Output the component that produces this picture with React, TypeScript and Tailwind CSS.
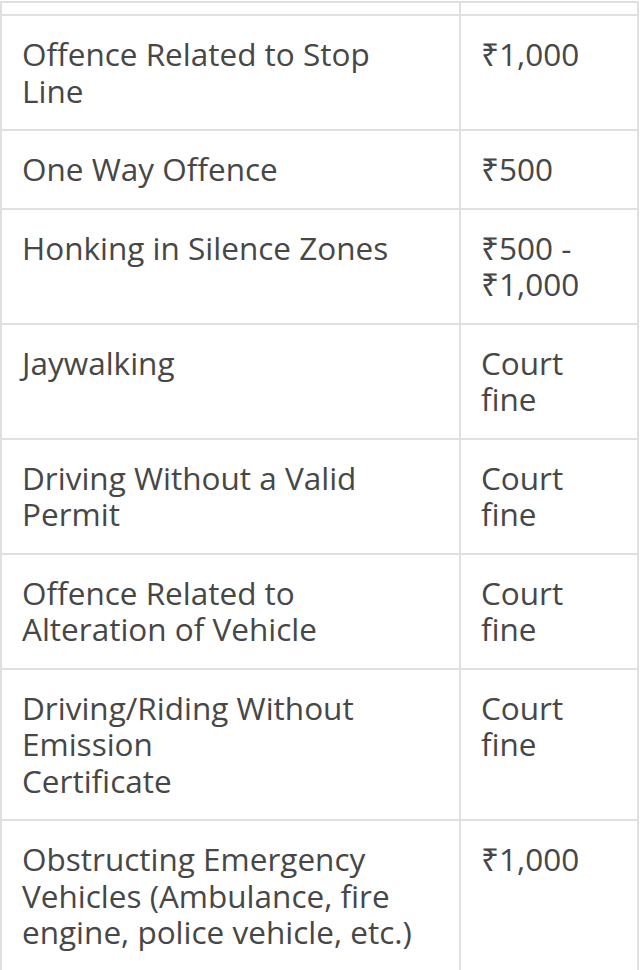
import React from 'react';

interface FineRow {
  offence: React.ReactNode;
  fine: React.ReactNode;
}

const rows: FineRow[] = [
  { offence: <>Offence Related to Stop<br />Line</>, fine: '₹1,000' },
  { offence: 'One Way Offence', fine: '₹500' },
  { offence: 'Honking in Silence Zones', fine: <>₹500 -<br />₹1,000</> },
  { offence: 'Jaywalking', fine: <>Court<br />fine</> },
  { offence: <>Driving Without a Valid<br />Permit</>, fine: <>Court<br />fine</> },
  { offence: <>Offence Related to<br />Alteration of Vehicle</>, fine: <>Court<br />fine</> },
  { offence: <>Driving/Riding Without<br />Emission<br />Certificate</>, fine: <>Court<br />fine</> },
  {
    offence: <>Obstructing Emergency<br />Vehicles (Ambulance, fire<br />engine, police vehicle, etc.)</>,
    fine: '₹1,000'
  }
];

export default function App() {
  return (
    <div className="min-h-[970px] bg-white pt-px font-['Open_Sans',sans-serif] text-[#474747]">
      <table className="w-[639px] table-fixed border-collapse">
        <colgroup>
          <col className="w-[459px]" />
          <col />
        </colgroup>
        <tbody>
          <tr>
            <td className="h-[13px] border-2 border-[#e0e0e0] p-0" />
            <td className="h-[13px] border-2 border-[#e0e0e0] p-0" />
          </tr>
          {rows.map((row, i) => (
            <tr key={i}>
              <td className="border-2 border-[#e0e0e0] px-5 py-5 align-top text-[31.5px] leading-[36.5px] whitespace-nowrap">
                {row.offence}
              </td>
              <td className="border-2 border-[#e0e0e0] px-5 py-5 align-top text-[31.5px] leading-[36.5px] whitespace-nowrap">
                {row.fine}
              </td>
            </tr>
          ))}
        </tbody>
      </table>
    </div>
  );
}
